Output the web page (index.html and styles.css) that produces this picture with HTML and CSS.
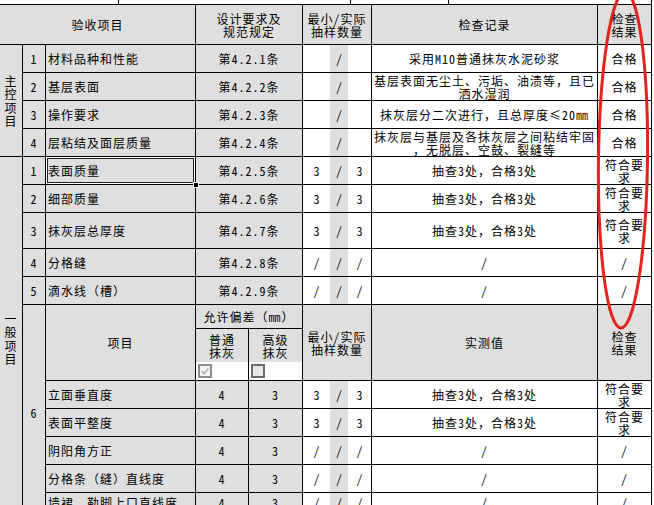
FILE: index.html
```html
<!DOCTYPE html>
<html lang="zh-CN">
<head>
<meta charset="utf-8">
<title>抹灰工程检验批质量验收记录</title>
<link rel="stylesheet" href="styles.css">
</head>
<body>
<div class="sheet">
  <div class="strip">
    <span class="sp sp1"></span><span class="sp sp2"></span><span class="sp sp3"></span><span class="sp sp4"></span>
  </div>
  <div class="grid">
    <!-- header -->
    <div class="c s3">验收项目</div>
    <div class="c s2">设计要求及<br>规范规定</div>
    <div class="c">最小/实际<br>抽样数量</div>
    <div class="c">检查记录</div>
    <div class="c">检查<br>结果</div>

    <!-- 主控项目 -->
    <div class="c r4 vt"><span>主控项目</span></div>
    <div class="c">1</div>
    <div class="c l">材料品种和性能</div>
    <div class="c s2">第4.2.1条</div>
    <div class="c q"><span class="qa"></span><span class="qb">/</span><span class="qc"></span></div>
    <div class="c w">采用M10普通抹灰水泥砂浆</div>
    <div class="c w">合格</div>

    <div class="c">2</div>
    <div class="c l">基层表面</div>
    <div class="c s2">第4.2.2条</div>
    <div class="c q"><span class="qa"></span><span class="qb">/</span><span class="qc"></span></div>
    <div class="c w">基层表面无尘土、污垢、油渍等，且已<br>洒水湿润</div>
    <div class="c w">合格</div>

    <div class="c">3</div>
    <div class="c l">操作要求</div>
    <div class="c s2">第4.2.3条</div>
    <div class="c q"><span class="qa"></span><span class="qb">/</span><span class="qc"></span></div>
    <div class="c w">抹灰层分二次进行，且总厚度≤20㎜</div>
    <div class="c w">合格</div>

    <div class="c">4</div>
    <div class="c l">层粘结及面层质量</div>
    <div class="c s2">第4.2.4条</div>
    <div class="c q"><span class="qa"></span><span class="qb">/</span><span class="qc"></span></div>
    <div class="c w">抹灰层与基层及各抹灰层之间粘结牢固<br>，无脱层、空鼓、裂缝等</div>
    <div class="c w">合格</div>

    <!-- 一般项目 -->
    <div class="c r12 vt"><span>一般项目</span></div>
    <div class="c">1</div>
    <div class="c l sel">表面质量</div>
    <div class="c s2">第4.2.5条</div>
    <div class="c q"><span class="qa">3</span><span class="qb">/</span><span class="qc">3</span></div>
    <div class="c w">抽查3处，合格3处</div>
    <div class="c w">符合要求</div>

    <div class="c">2</div>
    <div class="c l">细部质量</div>
    <div class="c s2">第4.2.6条</div>
    <div class="c q"><span class="qa">3</span><span class="qb">/</span><span class="qc">3</span></div>
    <div class="c w">抽查3处，合格3处</div>
    <div class="c w">符合要求</div>

    <div class="c">3</div>
    <div class="c l">抹灰层总厚度</div>
    <div class="c s2">第4.2.7条</div>
    <div class="c q"><span class="qa">3</span><span class="qb">/</span><span class="qc">3</span></div>
    <div class="c w">抽查3处，合格3处</div>
    <div class="c w">符合要求</div>

    <div class="c">4</div>
    <div class="c l">分格缝</div>
    <div class="c s2">第4.2.8条</div>
    <div class="c q"><span class="qa">/</span><span class="qb">/</span><span class="qc">/</span></div>
    <div class="c w">/</div>
    <div class="c w">/</div>

    <div class="c">5</div>
    <div class="c l">滴水线（槽）</div>
    <div class="c s2">第4.2.9条</div>
    <div class="c q"><span class="qa">/</span><span class="qb">/</span><span class="qc">/</span></div>
    <div class="c w">/</div>
    <div class="c w">/</div>

    <!-- 6 允许偏差 -->
    <div class="c r7">6</div>
    <div class="c r2">项目</div>
    <div class="c s2">允许偏差（㎜）</div>
    <div class="c r2">最小/实际<br>抽样数量</div>
    <div class="c r2">实测值</div>
    <div class="c r2">检查<br>结果</div>

    <div class="c opt">
      <span class="lab">普通<br>抹灰</span>
      <span class="chk"><span class="cb cb-on"><svg viewBox="0 0 10 10" width="10" height="10"><path d="M1.8 5.2 L4 7.6 L8.4 2.4" fill="none" stroke="#a9a9a9" stroke-width="1.4"/></svg></span></span>
    </div>
    <div class="c opt">
      <span class="lab">高级<br>抹灰</span>
      <span class="chk"><span class="cb cb-off"></span></span>
    </div>

    <div class="c l">立面垂直度</div>
    <div class="c">4</div>
    <div class="c">3</div>
    <div class="c q"><span class="qa">3</span><span class="qb">/</span><span class="qc">3</span></div>
    <div class="c w">抽查3处，合格3处</div>
    <div class="c w">符合要求</div>

    <div class="c l">表面平整度</div>
    <div class="c">4</div>
    <div class="c">3</div>
    <div class="c q"><span class="qa">3</span><span class="qb">/</span><span class="qc">3</span></div>
    <div class="c w">抽查3处，合格3处</div>
    <div class="c w">符合要求</div>

    <div class="c l">阴阳角方正</div>
    <div class="c">4</div>
    <div class="c">3</div>
    <div class="c q"><span class="qa">/</span><span class="qb">/</span><span class="qc">/</span></div>
    <div class="c w">/</div>
    <div class="c w">/</div>

    <div class="c l">分格条（缝）直线度</div>
    <div class="c">4</div>
    <div class="c">3</div>
    <div class="c q"><span class="qa">/</span><span class="qb">/</span><span class="qc">/</span></div>
    <div class="c w">/</div>
    <div class="c w">/</div>

    <div class="c l up">墙裙、勒脚上口直线度</div>
    <div class="c up">4</div>
    <div class="c up">3</div>
    <div class="c q up"><span class="qa">/</span><span class="qb">/</span><span class="qc">/</span></div>
    <div class="c w up">/</div>
    <div class="c w up">/</div>
  </div>

  <svg class="mark" width="654" height="505" viewBox="0 0 654 505">
    <ellipse cx="623" cy="160" rx="24.5" ry="168" transform="rotate(0.7 623 160)" fill="none" stroke="#e3231d" stroke-width="3"/>
  </svg>
</div>
</body>
</html>
```

FILE: styles.css
```css
html, body {
  margin: 0;
  padding: 0;
  background: #fff;
}
body {
  width: 654px;
  height: 505px;
  overflow: hidden;
  font-family: "Noto Sans Mono CJK SC", "Noto Sans CJK SC", sans-serif;
  font-size: 12px;
  letter-spacing: 1px;
  color: #000;
}
.sheet {
  position: relative;
  width: 654px;
  height: 505px;
  overflow: hidden;
}
.strip {
  display: flex;
  width: 652px;
  height: 5px;
  box-sizing: border-box;
  border-bottom: 1px solid #000;
}
.sp {
  box-sizing: border-box;
  border-right: 1px solid #000;
}
.sp1 { width: 119px; }
.sp2 { width: 232px; }
.sp3 { width: 98px; }
.sp4 { width: 203px; }

.grid {
  display: grid;
  grid-template-columns: 23px 23px 150px 53px 54px 69px 226px 54px;
  grid-template-rows: 40px repeat(6, 28px) 36px repeat(2, 28px) 24px 52px repeat(5, 28px);
  width: 652px;
}
.c {
  box-sizing: border-box;
  border-right: 1px solid #000;
  border-bottom: 1px solid #000;
  background: #dfdfdf;
  display: flex;
  align-items: center;
  justify-content: center;
  text-align: center;
  padding: 0 2px;
  line-height: 13px;
  white-space: normal;
}
.s2 { grid-column: span 2; }
.s3 { grid-column: span 3; }
.r2 { grid-row: span 2; }
.r4 { grid-row: span 4; }
.r7 { grid-row: span 7; }
.r12 { grid-row: span 12; }

.l {
  justify-content: flex-start;
  text-align: left;
}
.w { background: #fff; }

.vt span {
  display: block;
  width: 13px;
  line-height: 13.5px;
  word-break: break-all;
}

.q {
  padding: 0;
  align-items: stretch;
  background: #fff;
}
.q span {
  display: flex;
  align-items: center;
  justify-content: center;
  letter-spacing: 0;
}
.qa { width: 27px; }
.qb { width: 18px; background: #dfdfdf; }
.qc { flex: 1; }

.up { align-items: flex-start; padding-top: 3px; }
.q.up { padding-top: 0; }
.q.up span { align-items: flex-start; padding-top: 3px; }

.opt {
  padding: 0;
  flex-direction: column;
  align-items: stretch;
  justify-content: flex-start;
}
.lab {
  height: 33px;
  display: flex;
  align-items: center;
  justify-content: center;
}
.chk {
  flex: 1;
  background: #fff;
  display: flex;
  align-items: flex-start;
  padding: 2px 0 0 2px;
}
.cb {
  width: 14px;
  height: 14px;
  box-sizing: border-box;
  border: 2px solid #8e8e8e;
  background: #f3f3f3;
  display: flex;
  align-items: center;
  justify-content: center;
}
.cb-off {
  border-color: #6a6a6a;
  background: #e8e8e8;
}

.sel {
  position: relative;
  z-index: 1;
}
.sel::after {
  content: "";
  position: absolute;
  inset: 0;
  border: 1px solid #fff;
  box-shadow: inset 0 0 0 1px #222;
  pointer-events: none;
}
.sel::before {
  content: "";
  position: absolute;
  right: -4px;
  bottom: -4px;
  width: 4px;
  height: 4px;
  background: #000;
  border: 1px solid #fff;
  z-index: 2;
}

.mark {
  position: absolute;
  left: 0;
  top: 0;
  pointer-events: none;
}
```
